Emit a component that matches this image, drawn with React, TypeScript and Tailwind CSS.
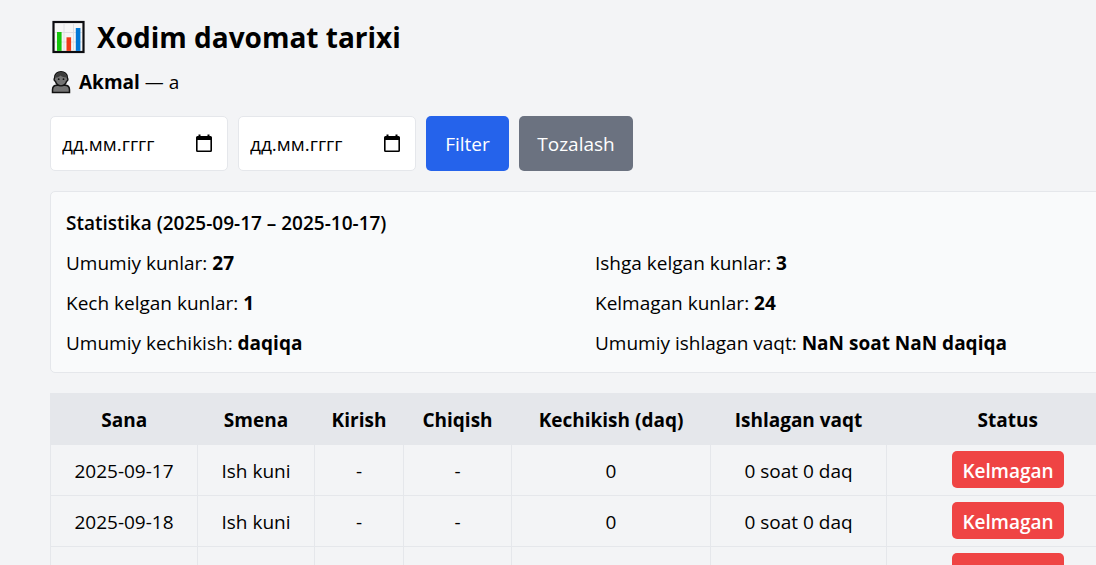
import { useState } from "react";

const stats = [
  { label: "Umumiy kunlar", value: "27" },
  { label: "Ishga kelgan kunlar", value: "3" },
  { label: "Kech kelgan kunlar", value: "1" },
  { label: "Kelmagan kunlar", value: "24" },
  { label: "Umumiy kechikish", value: "daqiqa" },
  { label: "Umumiy ishlagan vaqt", value: "NaN soat NaN daqiqa" },
];

const columns = [
  { title: "Sana", width: "w-[147px]" },
  { title: "Smena", width: "w-[117px]" },
  { title: "Kirish", width: "w-[89px]" },
  { title: "Chiqish", width: "w-[108px]" },
  { title: "Kechikish (daq)", width: "w-[199px]" },
  { title: "Ishlagan vaqt", width: "w-[176px]" },
  { title: "Status", width: "" },
];

const days = ["2025-09-17", "2025-09-18", "2025-09-19"];

function ChartIcon() {
  return (
    <svg viewBox="0 0 34 34" className="size-[34px] shrink-0" aria-hidden="true">
      <rect x="2.500" y="2" width="30" height="30" fill="#f5f5f5" stroke="#0c0c10" strokeWidth="2.200" />
      <path d="M13 3.500v27M22.500 3.500v27M4 12.500h27M4 22h27" stroke="#dedfe2" strokeWidth="1" />
      <path d="M6 12h4.600v18.900H6z" fill="#16c60c" />
      <path d="M15.500 17.300h4.600v13.600h-4.600z" fill="#f03a17" />
      <path d="M24.800 8h4.600v22.900h-4.600z" fill="#0078d7" />
    </svg>
  );
}

function PersonIcon() {
  return (
    <svg viewBox="0 0 20 24" className="h-6 w-5 shrink-0" aria-hidden="true">
      <path
        d="M1.500 22.400v-2.600c0-2.800 2-4.600 4.600-4.600h7.800c2.600 0 4.600 1.800 4.600 4.600v2.600z"
        fill="#737373"
        stroke="#111"
        strokeWidth="1.500"
      />
      <path
        d="M10 1.700c3.700 0 6.300 2.400 6.300 5.600 0 1 .6 1 .6 2.100 0 1-.7 1.600-1.300 1.900-.8 2.700-2.800 4.600-5.600 4.600s-4.800-1.900-5.600-4.600c-.6-.3-1.300-.9-1.300-1.900 0-1.100.6-1.100.6-2.100 0-3.200 2.600-5.600 6.300-5.600z"
        fill="#737373"
        stroke="#111"
        strokeWidth="1.400"
      />
      <path d="M4.300 7.500c1.600.2 3.700-.4 5-2 1.400 1.300 3.800 2 6.400 2C15.300 4 13.300 2.300 10 2.300S4.600 4.200 4.300 7.500z" fill="#3b3b3b" />
      <circle cx="7.700" cy="9.200" r=".9" fill="#111" />
      <circle cx="12.500" cy="9.200" r=".9" fill="#111" />
    </svg>
  );
}

function CalendarIcon() {
  return (
    <svg viewBox="0 0 18 20" className="h-5 w-[18px]" aria-hidden="true">
      <path
        fillRule="evenodd"
        d="M3.500 .5h2V2h7V.5h2V2h1A1.500 1.500 0 0 1 17 3.500v13a1.500 1.500 0 0 1-1.500 1.500h-13A1.500 1.500 0 0 1 1 16.500v-13A1.500 1.500 0 0 1 2.500 2h1zM2.600 6v10.400h12.800V6z"
        fill="#000"
      />
    </svg>
  );
}

function DateField({ label }: { label: string }) {
  const [value, setValue] = useState("");
  return (
    <div className="flex w-[178px] items-center rounded-[5px] border border-gray-200 bg-white pr-3.5 pl-[11px]">
      <input
        type="text"
        aria-label={label}
        placeholder="дд.мм.гггг"
        value={value}
        onChange={(e) => setValue(e.target.value)}
        className="w-full min-w-0 bg-transparent outline-none placeholder:text-black placeholder:opacity-100"
      />
      <button type="button" aria-label={label + ": kalendar"} className="shrink-0">
        <CalendarIcon />
      </button>
    </div>
  );
}

export default function App() {
  return (
    <div className="h-screen overflow-hidden bg-gray-100 font-['Open_Sans','Noto_Sans',sans-serif] text-[19px] leading-[30px] text-black">
      <main className="-mr-[34px] pt-[17px] pl-[50px]">
        <header className="mb-[19px] px-px">
          <h1 className="mb-2.5 flex items-center gap-3 text-[28px] leading-10 font-bold">
            <ChartIcon />
            Xodim davomat tarixi
          </h1>
          <p className="flex items-center gap-2">
            <PersonIcon />
            <span>
              <b>Akmal</b> — a
            </span>
          </p>
        </header>

        <form className="mb-5 flex h-[55px] gap-2.5" onSubmit={(e) => e.preventDefault()}>
          <DateField label="Boshlanish sanasi" />
          <DateField label="Tugash sanasi" />
          <button type="submit" className="min-w-[83px] rounded-[5px] bg-[#2563eb] px-4 text-white">
            Filter
          </button>
          <button type="reset" className="min-w-[114px] rounded-[5px] bg-[#6b7280] px-4 text-white">
            Tozalash
          </button>
        </form>

        <section className="mb-5 rounded-[5px] border border-gray-200 bg-gray-50 px-[15px] pt-4 pb-3.5">
          <h2 className="mb-2.5 font-semibold">Statistika (2025-09-17 – 2025-10-17)</h2>
          <div className="grid grid-cols-2 gap-2.5">
            {stats.map((s) => (
              <p key={s.label}>
                {s.label}: <b>{s.value}</b>
              </p>
            ))}
          </div>
        </section>

        <table className="w-full table-fixed border-collapse border border-gray-200 text-center">
          <thead>
            <tr className="h-[51px] bg-gray-200">
              {columns.map((c) => (
                <th key={c.title} className={c.width + " pt-0.5 font-bold"}>
                  {c.title}
                </th>
              ))}
            </tr>
          </thead>
          <tbody>
            {days.map((day) => (
              <tr key={day} className="h-[51px]">
                <td className="border border-gray-200 pt-0.5">{day}</td>
                <td className="border border-gray-200 pt-0.5">Ish kuni</td>
                <td className="border border-gray-200 pt-0.5">-</td>
                <td className="border border-gray-200 pt-0.5">-</td>
                <td className="border border-gray-200 pt-0.5">0</td>
                <td className="border border-gray-200 pt-0.5">0 soat 0 daq</td>
                <td className="border border-gray-200 pb-0.5">
                  <span className="inline-block rounded-[5px] bg-[#ef4444] px-2.5 pt-1.5 pb-0.5 align-middle leading-[29px] font-semibold text-white">
                    Kelmagan
                  </span>
                </td>
              </tr>
            ))}
          </tbody>
        </table>
      </main>
    </div>
  );
}
